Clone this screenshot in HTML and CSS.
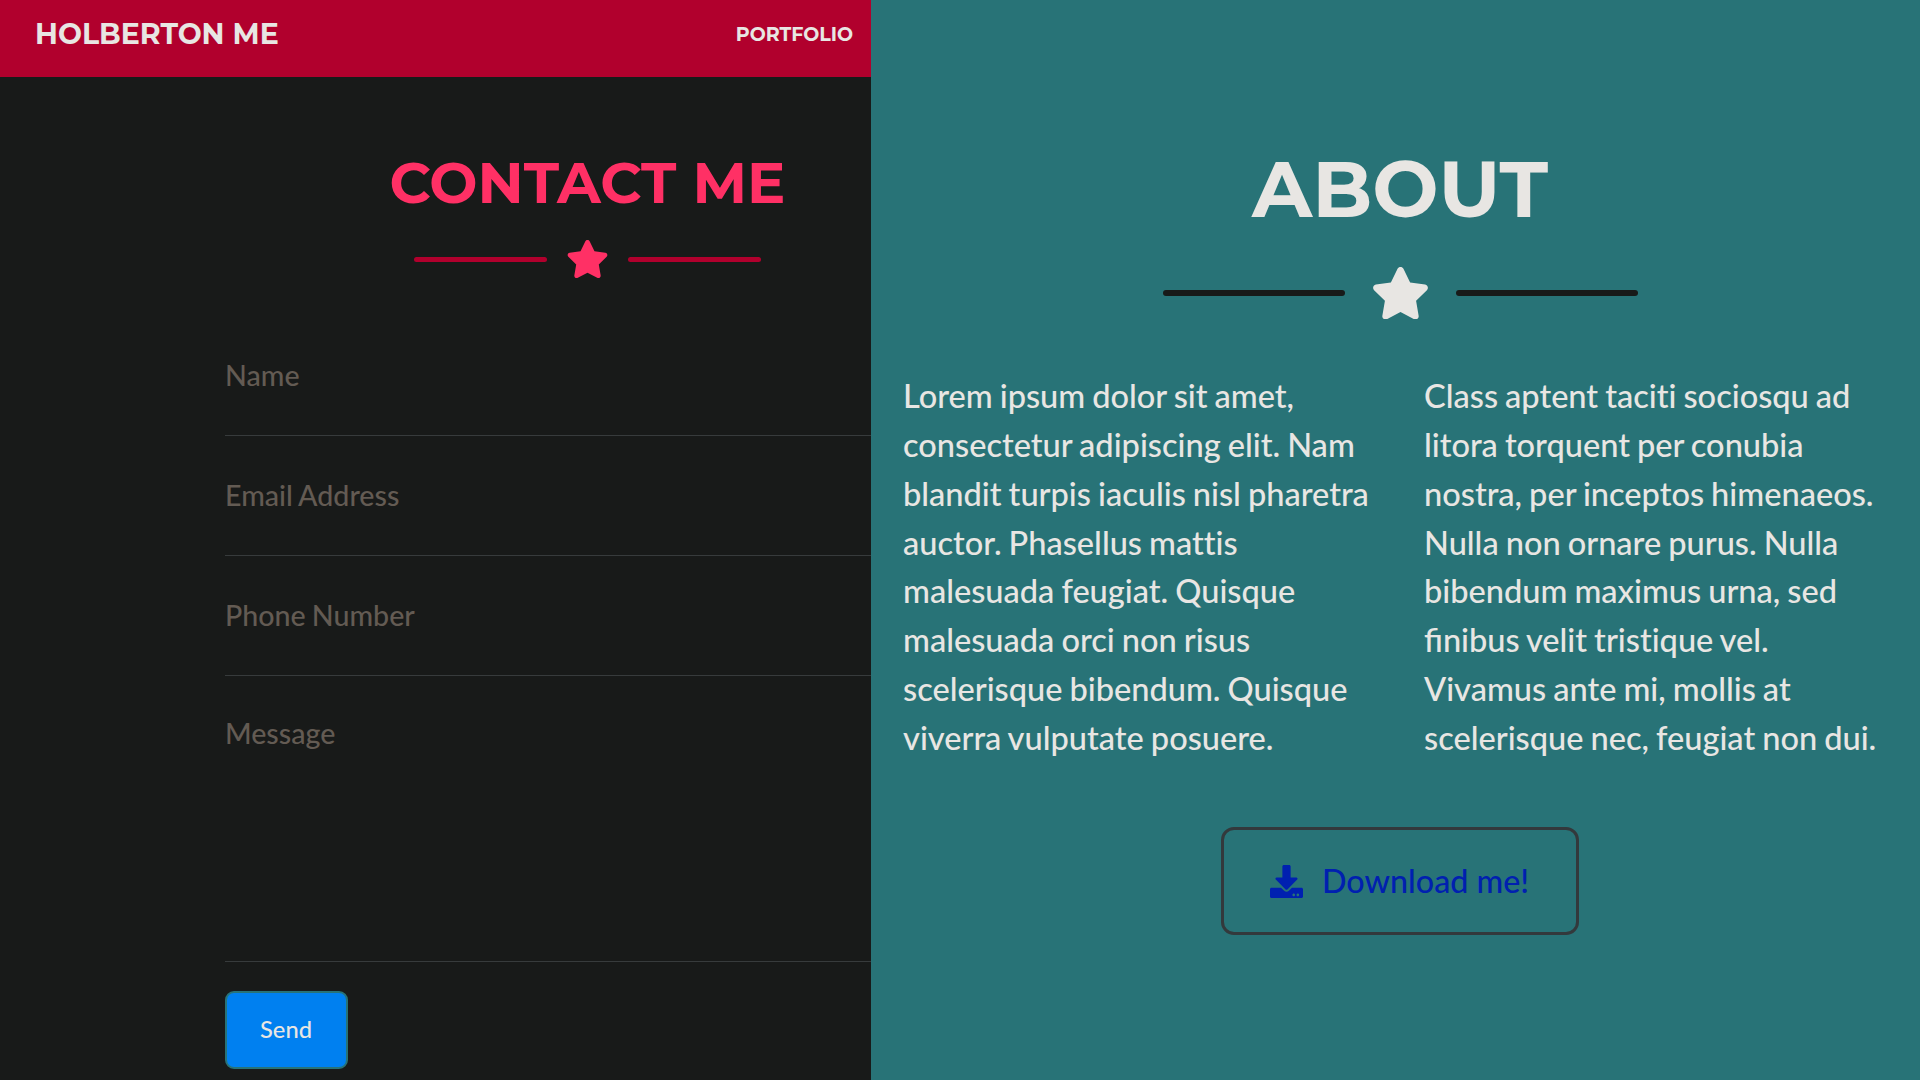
FILE: index.html
```html
<!DOCTYPE html>
<html lang="en">
<head>
<meta charset="utf-8">
<title>Holberton Me</title>
<link rel="stylesheet" href="styles.css">
</head>
<body>
<main class="page">
  <section class="contact">
    <header class="navbar">
      <a class="brand">HOLBERTON ME</a>
      <a class="nav-link">PORTFOLIO</a>
    </header>
    <div class="contact-body">
      <h2 class="contact-title">CONTACT ME</h2>
      <div class="divider">
        <span class="divider-line"></span>
        <svg class="divider-star" viewBox="0 0 576 512"><path d="M259.3 17.8L194 150.2 47.9 171.5c-26.2 3.8-36.7 36.1-17.7 54.6l105.7 103-25 145.5c-4.5 26.3 23.2 46 46.4 33.7L288 439.6l130.7 68.7c23.2 12.2 50.9-7.4 46.4-33.7l-25-145.5 105.7-103c19-18.5 8.5-50.8-17.7-54.6L382 150.2 316.7 17.8c-11.7-23.6-45.6-23.9-57.4 0z"/></svg>
        <span class="divider-line"></span>
      </div>
      <form class="form">
        <label class="field">Name</label>
        <label class="field">Email Address</label>
        <label class="field">Phone Number</label>
        <label class="field field-message">Message</label>
        <button class="send" type="button">Send</button>
      </form>
    </div>
  </section>
  <section class="about">
    <h2 class="about-title">ABOUT</h2>
    <div class="divider divider-large">
      <span class="divider-line"></span>
      <svg class="divider-star" viewBox="0 0 576 512"><path d="M259.3 17.8L194 150.2 47.9 171.5c-26.2 3.8-36.7 36.1-17.7 54.6l105.7 103-25 145.5c-4.5 26.3 23.2 46 46.4 33.7L288 439.6l130.7 68.7c23.2 12.2 50.9-7.4 46.4-33.7l-25-145.5 105.7-103c19-18.5 8.5-50.8-17.7-54.6L382 150.2 316.7 17.8c-11.7-23.6-45.6-23.9-57.4 0z"/></svg>
      <span class="divider-line"></span>
    </div>
    <div class="columns">
      <p class="copy">Lorem ipsum dolor sit amet,<br>consectetur adipiscing elit. Nam<br>blandit turpis iaculis nisl pharetra<br>auctor. Phasellus mattis<br>malesuada feugiat. Quisque<br>malesuada orci non risus<br>scelerisque bibendum. Quisque<br>viverra vulputate posuere.</p>
      <p class="copy">Class aptent taciti sociosqu ad<br>litora torquent per conubia<br>nostra, per inceptos himenaeos.<br>Nulla non ornare purus. Nulla<br>bibendum maximus urna, sed<br><span class="ligature">fi</span>nibus velit tristique vel.<br>Vivamus ante mi, mollis at<br>scelerisque nec, feugiat non dui.</p>
    </div>
    <a class="download">
      <svg class="download-icon" viewBox="0 0 512 512"><path d="M216 0h80c13.3 0 24 10.7 24 24v168h87.7c17.8 0 26.7 21.5 14.1 34.1L269.7 378.3c-7.5 7.5-19.8 7.5-27.3 0L90.1 226.1c-12.6-12.6-3.7-34.1 14.1-34.1H192V24c0-13.3 10.7-24 24-24zm296 376v112c0 13.3-10.7 24-24 24H24c-13.3 0-24-10.7-24-24V376c0-13.3 10.7-24 24-24h146.7l49 49c20.1 20.1 52.5 20.1 72.6 0l49-49H488c13.3 0 24 10.7 24 24zm-124 88c0-11-9-20-20-20s-20 9-20 20 9 20 20 20 20-9 20-20zm64 0c0-11-9-20-20-20s-20 9-20 20 9 20 20 20 20-9 20-20z"/></svg>
      <span>Download me!</span>
    </a>
  </section>
</main>
</body>
</html>
```
FILE: styles.css
```css
* { box-sizing: border-box; }

body {
  margin: 0;
  font-family: Lato, "Liberation Sans", sans-serif;
}

.page {
  display: grid;
  grid-template-columns: 871px 1fr;
  height: 1080px;
  overflow: hidden;
}

.contact {
  background: #181a19;
  overflow: hidden;
}

.navbar {
  display: flex;
  justify-content: space-between;
  align-items: center;
  height: 77px;
  padding: 0 18px 9px 35px;
  background: #b1002d;
  color: #e8e6e3;
}

.brand,
.nav-link,
.contact-title,
.about-title {
  font-family: Montserrat, Inter, sans-serif;
  font-weight: 700;
  white-space: nowrap;
}

.brand { font-size: 28.4px; }
.nav-link { font-size: 19px; }

.contact-body {
  display: flex;
  flex-direction: column;
  align-items: center;
  width: 1175px;
  padding-top: 72px;
}

.contact-title {
  margin: 0;
  font-size: 57.2px;
  line-height: 68px;
  color: #ff3065;
}

.divider {
  display: flex;
  align-items: center;
  gap: 19px;
  height: 38px;
  margin-top: 23px;
  color: #ff3065;
}

.divider-line {
  width: 133px;
  height: 5px;
  border-radius: 3px;
  background: #b1002d;
}

.divider-star {
  height: 38px;
  width: 43px;
  fill: currentColor;
}

.form {
  display: flex;
  flex-direction: column;
  align-items: flex-start;
  width: 725px;
  margin-top: 38px;
}

.field {
  width: 725px;
  height: 120px;
  padding-top: 39px;
  border-bottom: 1px solid #373b3c;
  font-size: 28.6px;
  font-weight: 500;
  line-height: 40px;
  word-spacing: -1px;
  color: #635b53;
}

.field-message {
  height: 286px;
  padding-top: 37px;
}

.send {
  width: 123px;
  height: 78px;
  margin-top: 29px;
  padding: 0 1px 2px 0;
  border: 2px solid #287377;
  border-radius: 9px;
  background: #0080f0;
  font: 500 23.7px Lato, sans-serif;
  color: #e8e6e3;
}

.about {
  display: flex;
  flex-direction: column;
  align-items: center;
  padding: 141px 0 0 9px;
  background: #287377;
  color: #e8e6e3;
}

.about-title {
  margin: 0;
  font-size: 78.6px;
  line-height: 96px;
}

.divider-large {
  gap: 26px;
  height: 52px;
  margin-top: 30px;
  color: #e8e6e3;
}

.divider-large .divider-line {
  width: 182px;
  height: 6px;
  background: #181a19;
}

.divider-large .divider-star {
  width: 59px;
  height: 52.5px;
}

.columns {
  display: grid;
  grid-template-columns: 521px 1fr;
  align-self: stretch;
  margin-top: 53px;
  padding-left: 23px;
}

.copy {
  margin: 0;
  font-size: 32.57px;
  font-weight: 500;
  line-height: 48.86px;
  white-space: nowrap;
  word-spacing: -1.2px;
  font-variant-ligatures: none;
}

.ligature { font-variant-ligatures: normal; }

.download {
  display: flex;
  align-items: center;
  width: 358px;
  height: 108px;
  margin-top: 64px;
  padding-left: 46px;
  gap: 19px;
  border: 3px solid #33393c;
  border-radius: 13px;
  font-size: 32.3px;
  font-weight: 500;
  color: #0020b0;
}

.download-icon {
  width: 33px;
  height: 33px;
  margin-top: 1px;
  fill: currentColor;
}
```
